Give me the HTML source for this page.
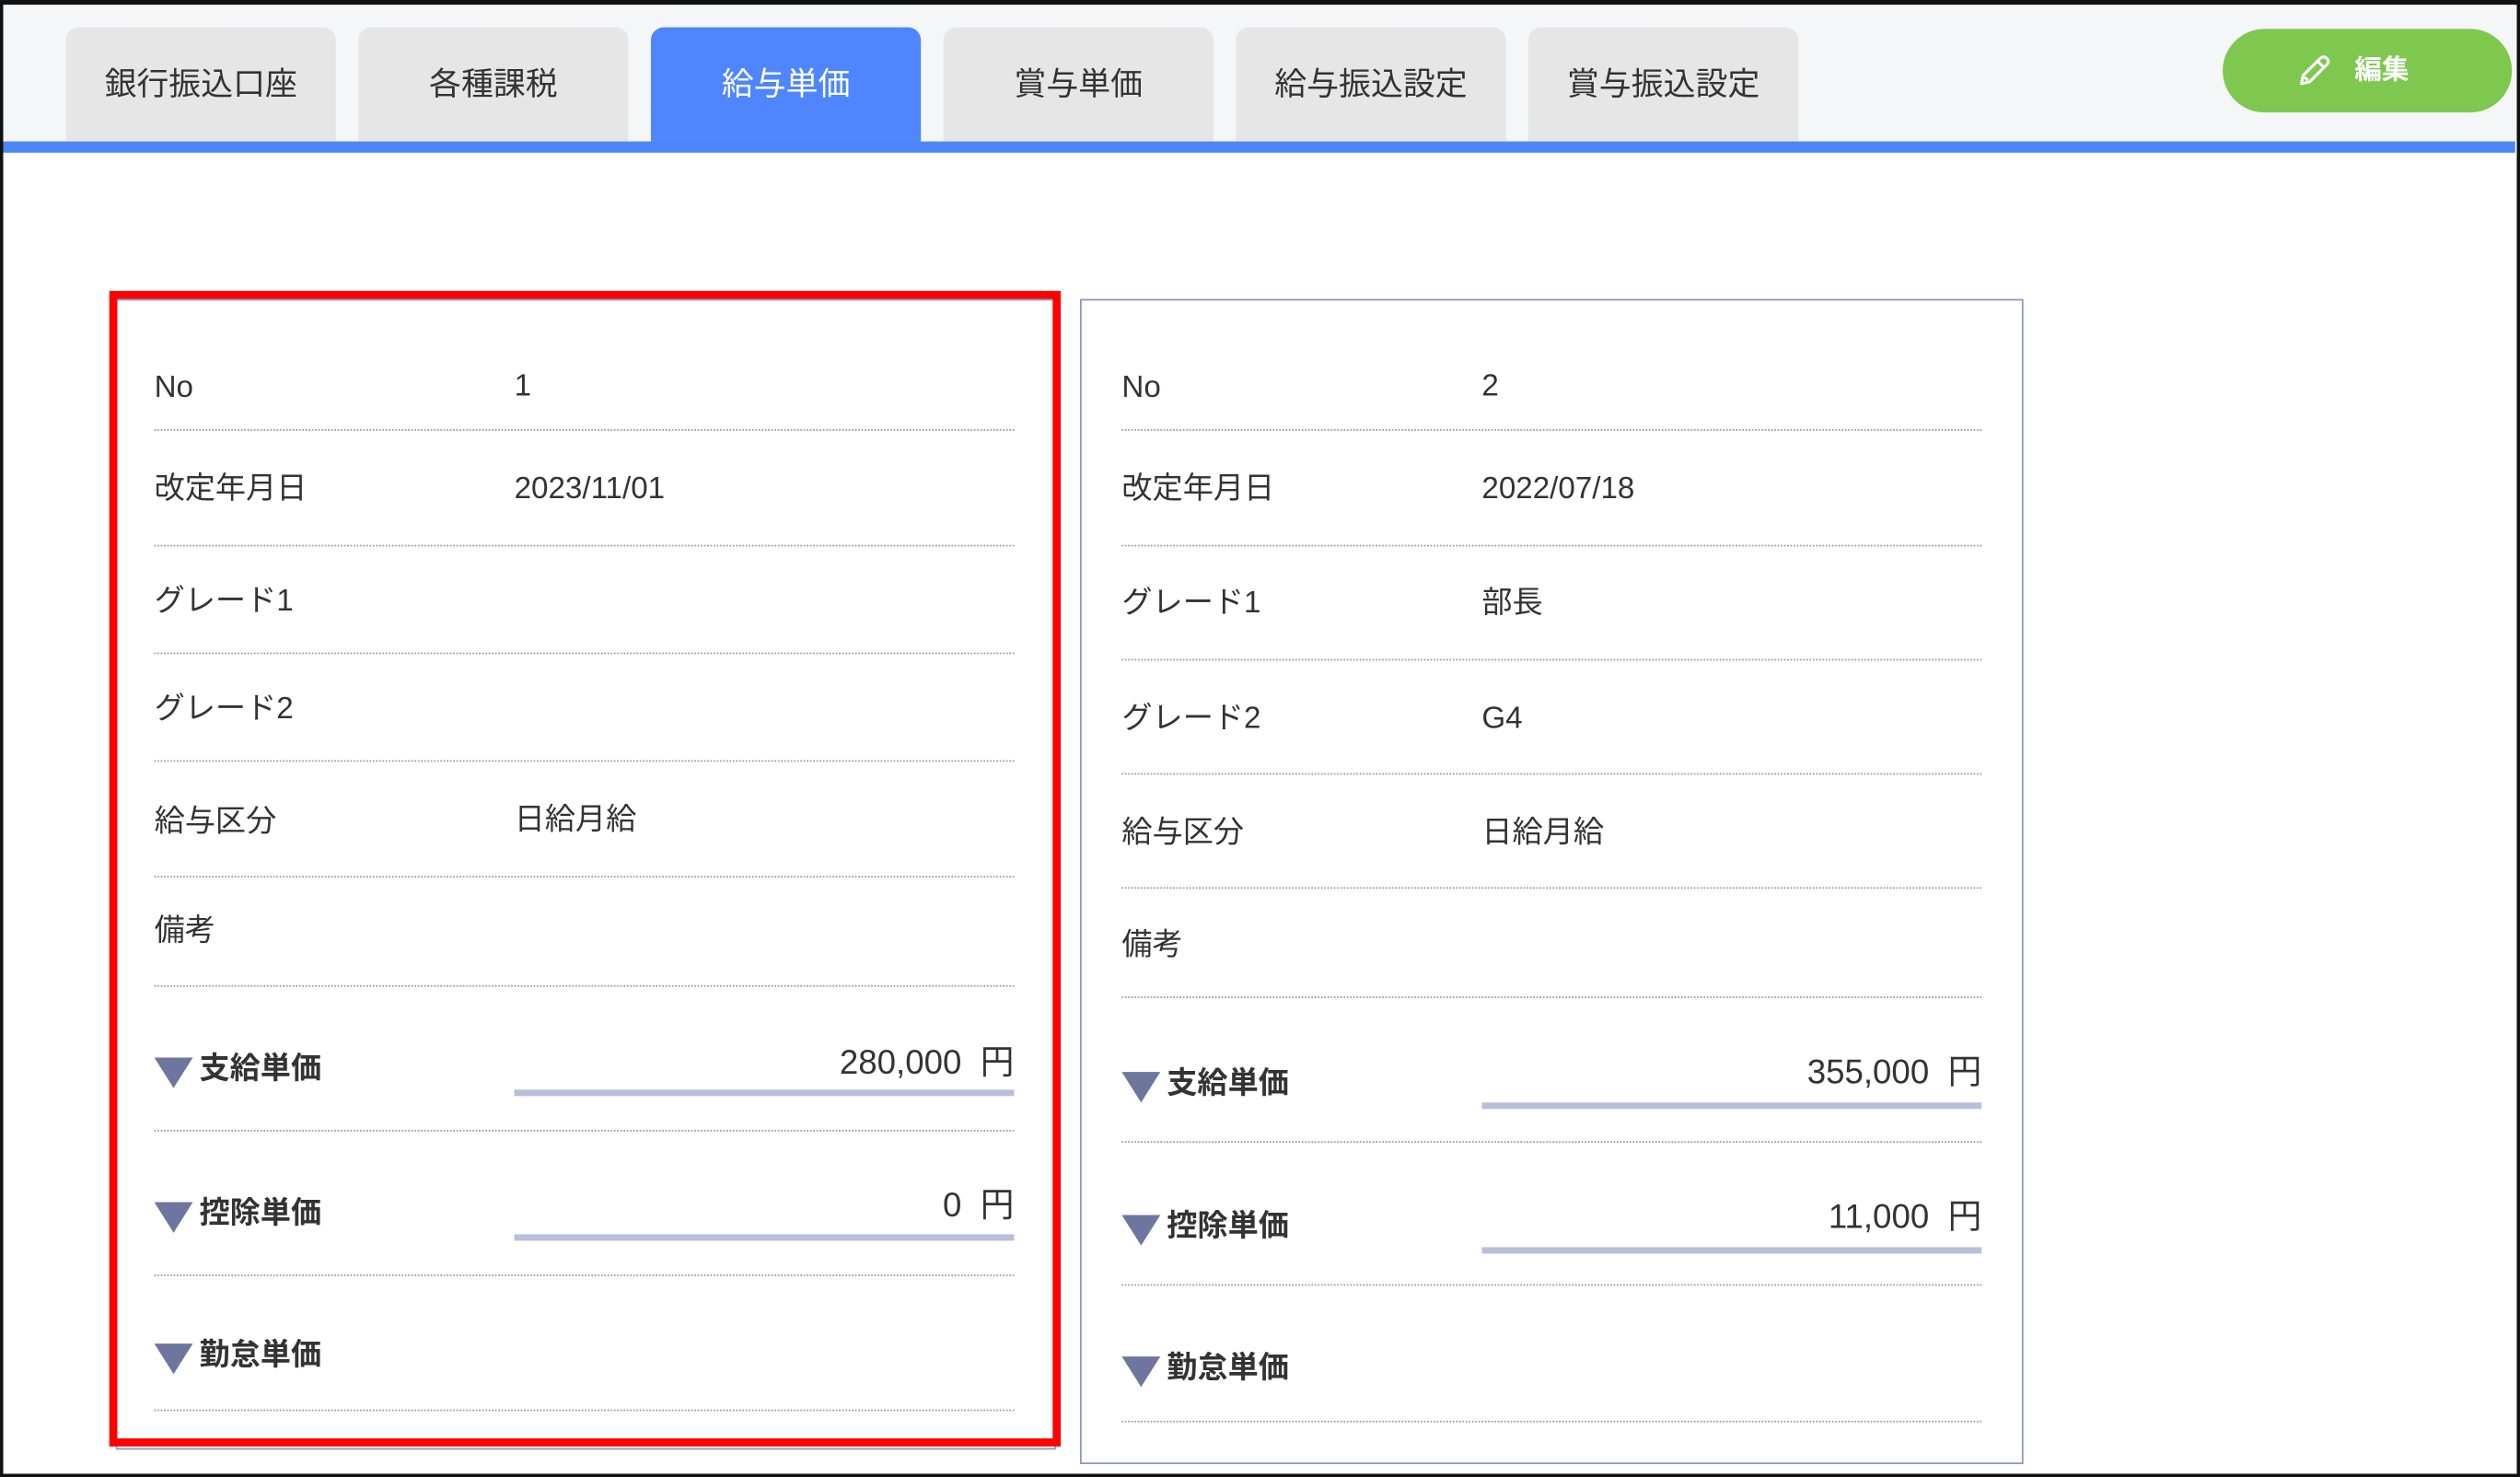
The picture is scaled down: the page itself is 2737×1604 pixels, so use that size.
<!DOCTYPE html>
<html><head><meta charset="utf-8"><style>
html,body{margin:0;padding:0;}
body{width:2737px;height:1604px;overflow:hidden;background:#fff;}
#w{position:absolute;left:0;top:0;width:1568px;height:919px;transform:scale(1.74554,1.74537);transform-origin:0 0;font-family:"Liberation Sans","Noto Sans CJK JP",sans-serif;color:#333;}
.a{position:absolute;}
.tab{position:absolute;top:17px;width:168px;height:71px;background:#e6e6e6;border-radius:8px 8px 0 0;font-size:20px;text-align:center;line-height:72px;color:#333;}
.lbl{position:absolute;font-size:19px;line-height:24px;color:#333;white-space:nowrap;margin-top:2px;}
.dl{position:absolute;height:0;border-top:1px dotted #999;}
.h{position:absolute;font-size:19px;font-weight:bold;line-height:24px;white-space:nowrap;padding-left:28px;margin-top:1px;}
.h:before{content:"";position:absolute;left:0;top:4px;width:0;height:0;border-left:12px solid transparent;border-right:12px solid transparent;border-top:19px solid #6e76a0;}
.amt{position:absolute;font-size:21px;line-height:24px;text-align:right;white-space:nowrap;margin-top:2px;}
.bar{position:absolute;height:4px;background:#b8bfd8;}
</style></head><body><div id="w">
<div class="a" style="left:0;top:0;width:1568px;height:919px;box-sizing:border-box;border:2px solid #111;border-top-width:3px;"></div>
<div class="a" style="left:2px;top:3px;width:1563px;height:85px;background:#f5f6f8;"></div>
<div class="tab" style="left:41px">銀行振込口座</div>
<div class="tab" style="left:223px">各種課税</div>
<div class="tab" style="left:405px;background:#4f86ff;color:#fff;height:76px">給与単価</div>
<div class="tab" style="left:587px">賞与単価</div>
<div class="tab" style="left:769px">給与振込設定</div>
<div class="tab" style="left:951px">賞与振込設定</div>
<div class="a" style="left:2px;top:88px;width:1563px;height:7px;background:#4f86f7;"></div>
<div class="a" style="left:1383px;top:18px;width:180px;height:52px;border-radius:26px;background:#7ec84f;color:#fff;font-size:17px;font-weight:bold;line-height:52px;">
<svg class="a" style="left:46px;top:15px" width="22" height="22" viewBox="0 0 22 22" fill="none" stroke="#fff" stroke-width="1.8" stroke-linejoin="round"><path d="M3 19 L4 14 L15 3 Q17 1.5 19 3.5 Q20.5 5.5 19 7 L8 18 Z M13 5 L17 9 M5 15 L7 17"/></svg>
<span class="a" style="left:82px;top:0">編集</span></div>

<div class="a" style="left:72px;top:186px;width:585px;height:716px;box-sizing:border-box;border:1px solid #8896c8;"></div>
<div class="a" style="left:68px;top:181px;width:592px;height:719px;box-sizing:border-box;border:5px solid #f00;"></div>
<div class="lbl" style="left:96px;top:228px">No</div><div class="lbl" style="left:320px;top:227px">1</div>
<div class="dl" style="left:96px;top:267px;width:535px"></div>
<div class="lbl" style="left:96px;top:291px">改定年月日</div><div class="lbl" style="left:320px;top:291px">2023/11/01</div>
<div class="dl" style="left:96px;top:339px;width:535px"></div>
<div class="lbl" style="left:96px;top:361px">グレード1</div>
<div class="dl" style="left:96px;top:406px;width:535px"></div>
<div class="lbl" style="left:96px;top:428px">グレード2</div>
<div class="dl" style="left:96px;top:473px;width:535px"></div>
<div class="lbl" style="left:96px;top:498px">給与区分</div><div class="lbl" style="left:320px;top:497px">日給月給</div>
<div class="dl" style="left:96px;top:545px;width:535px"></div>
<div class="lbl" style="left:96px;top:566px">備考</div>
<div class="dl" style="left:96px;top:613px;width:535px"></div>
<div class="h" style="left:96px;top:653px">支給単価</div>
<div class="amt" style="left:320px;top:648px;width:311px">280,000&nbsp;&nbsp;円</div>
<div class="bar" style="left:320px;top:678px;width:311px"></div>
<div class="dl" style="left:96px;top:703px;width:535px"></div>
<div class="h" style="left:96px;top:743px">控除単価</div>
<div class="amt" style="left:320px;top:737px;width:311px">0&nbsp;&nbsp;円</div>
<div class="bar" style="left:320px;top:768px;width:311px"></div>
<div class="dl" style="left:96px;top:793px;width:535px"></div>
<div class="h" style="left:96px;top:831px">勤怠単価</div>
<div class="dl" style="left:96px;top:877px;width:535px"></div>

<div class="a" style="left:672px;top:186px;width:587px;height:725px;box-sizing:border-box;border:1px solid #8896c8;"></div>
<div class="lbl" style="left:698px;top:228px">No</div><div class="lbl" style="left:922px;top:227px">2</div>
<div class="dl" style="left:698px;top:267px;width:535px"></div>
<div class="lbl" style="left:698px;top:291px">改定年月日</div><div class="lbl" style="left:922px;top:291px">2022/07/18</div>
<div class="dl" style="left:698px;top:339px;width:535px"></div>
<div class="lbl" style="left:698px;top:362px">グレード1</div><div class="lbl" style="left:922px;top:362px">部長</div>
<div class="dl" style="left:698px;top:410px;width:535px"></div>
<div class="lbl" style="left:698px;top:434px">グレード2</div><div class="lbl" style="left:922px;top:434px">G4</div>
<div class="dl" style="left:698px;top:481px;width:535px"></div>
<div class="lbl" style="left:698px;top:505px">給与区分</div><div class="lbl" style="left:922px;top:505px">日給月給</div>
<div class="dl" style="left:698px;top:552px;width:535px"></div>
<div class="lbl" style="left:698px;top:575px">備考</div>
<div class="dl" style="left:698px;top:620px;width:535px"></div>
<div class="h" style="left:698px;top:662px">支給単価</div>
<div class="amt" style="left:922px;top:654px;width:311px">355,000&nbsp;&nbsp;円</div>
<div class="bar" style="left:922px;top:686px;width:311px"></div>
<div class="dl" style="left:698px;top:710px;width:535px"></div>
<div class="h" style="left:698px;top:751px">控除単価</div>
<div class="amt" style="left:922px;top:744px;width:311px">11,000&nbsp;&nbsp;円</div>
<div class="bar" style="left:922px;top:776px;width:311px"></div>
<div class="dl" style="left:698px;top:799px;width:535px"></div>
<div class="h" style="left:698px;top:839px">勤怠単価</div>
<div class="dl" style="left:698px;top:884px;width:535px"></div>
</div></body></html>
